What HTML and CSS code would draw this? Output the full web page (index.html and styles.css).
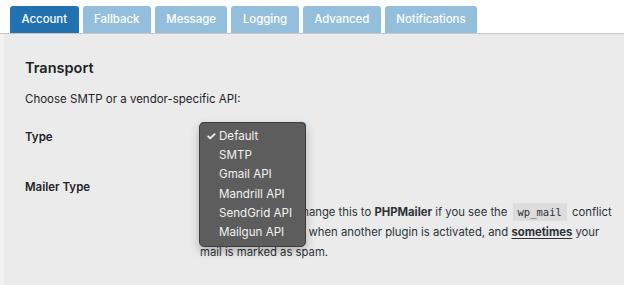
FILE: index.html
```html
<!DOCTYPE html>
<html lang="en">
<head>
  <meta charset="UTF-8">
  <title>Mailer Settings</title>
  <link rel="stylesheet" href="styles.css">
</head>
<body>
  <nav class="tabs">
    <a class="tab active">Account</a>
    <a class="tab">Fallback</a>
    <a class="tab">Message</a>
    <a class="tab">Logging</a>
    <a class="tab">Advanced</a>
    <a class="tab">Notifications</a>
  </nav>

  <div class="panel">
    <h2>Transport</h2>
    <p class="intro">Choose SMTP or a vendor-specific API:</p>

    <div class="field field-type">
      <div class="field-label">Type</div>
      <div class="field-control">
        <div class="select focused">Default</div>
        <!-- geoeffnetes Dropdown -->
        <ul class="menu">
          <li class="checked">Default</li>
          <li>SMTP</li>
          <li>Gmail API</li>
          <li>Mandrill API</li>
          <li>SendGrid API</li>
          <li>Mailgun API</li>
        </ul>
      </div>
    </div>

    <div class="field">
      <div class="field-label">Mailer Type</div>
      <div class="field-control">
        <div class="select">WordPress</div>
        <p class="desc">It is better to only change this to <strong>PHPMailer</strong> if you see the <code>wp_mail</code> conflict
          message appearing when another plugin is activated, and <strong class="u">sometimes</strong> your
          mail is marked as spam.</p>
      </div>
    </div>
  </div>
</body>
</html>
```

FILE: styles.css
```css
* { box-sizing: border-box; }
body {
  margin: 0;
  background: #fff;
  font-family: Inter, "Liberation Sans", sans-serif;
  color: #1d2327;
  font-size: 11.5px;
}

/* Tabs */
.tabs {
  display: flex;
  gap: 4px;
  padding: 6px 0 0 10px;
  border-bottom: 1px solid #c8c8c8;
}
.tab {
  display: block;
  height: 27px;
  line-height: 27px;
  padding: 0 11.5px;
  background: #93bfdd;
  color: #fff;
  font-weight: 500;
  font-size: 11.4px;
  border-radius: 3px 3px 0 0;
}
.tab.active { background: #2271b1; }

/* Panel */
.panel {
  background: #ebebeb;
  padding: 23px 21px 0;
  min-height: 251px;
  border-left: 4px solid #f1f1f1;
}
.panel h2 {
  margin: 0;
  font-size: 14.5px;
  font-weight: 600;
  line-height: 22px;
}
.intro { margin: 10px 0 12px; line-height: 20px; }

.field {
  display: grid;
  grid-template-columns: 175px 1fr;
}
.field-type { margin-bottom: 22px; }
.field-label {
  font-weight: 600;
  line-height: 25px;
  padding-top: 3px;
}
.field-type .field-label { padding-top: 4px; }
.field-control { position: relative; }
.select {
  width: 106px;
  height: 25px;
  border: 1px solid #8c8f94;
  border-radius: 4px;
  background: #fff;
  margin-top: 1px;
}
.select.focused { border-color: #2271b1; border-right-width: 3px; }

.desc {
  margin: 4px 0 0;
  line-height: 20px;
  width: 420px;
  font-size: 11.3px;
  color: #2c3338;
}
.desc code {
  font-family: "DejaVu Sans Mono", monospace;
  font-size: 10.5px;
  background: #dcdcdc;
  padding: 3px 5px;
  margin: 0 2px;
}
.desc .u { text-decoration: underline; text-underline-offset: 2px; }

/* Dropdown */
.menu {
  position: absolute;
  left: -1px;
  top: 1px;
  width: 107px;
  margin: 0;
  padding: 4px 0;
  list-style: none;
  background: #5d5d5d;
  border: 1px solid #3e3e3e;
  border-radius: 5px;
  box-shadow: 0 4px 10px rgba(0,0,0,0.25);
  z-index: 10;
}
.menu li {
  color: #f2f2f2;
  line-height: 19.2px;
  padding-left: 19px;
  font-size: 11.6px;
}
.menu li.checked { position: relative; }
.menu li.checked::before {
  content: "\2713";
  position: absolute;
  left: 6px;
  font-weight: 700;
}
```
